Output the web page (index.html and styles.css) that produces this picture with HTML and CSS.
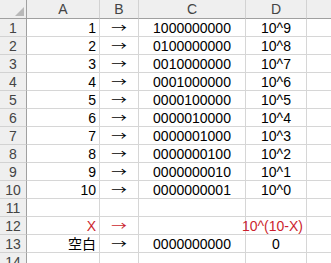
FILE: index.html
```html
<!DOCTYPE html>
<html lang="ja">
<head>
<meta charset="utf-8">
<link rel="stylesheet" href="styles.css">
</head>
<body>
<div class="sheet">
  <div class="hd corner"><span class="tri"></span></div>
  <div class="hd col">A</div>
  <div class="hd col">B</div>
  <div class="hd col">C</div>
  <div class="hd col">D</div>
  <div class="hd col last"></div>

  <div class="hd row">1</div><div class="c r">1</div><div class="c m"><span class="arw">→</span></div><div class="c m">1000000000</div><div class="c m">10^9</div><div class="c last"></div>
  <div class="hd row">2</div><div class="c r">2</div><div class="c m"><span class="arw">→</span></div><div class="c m">0100000000</div><div class="c m">10^8</div><div class="c last"></div>
  <div class="hd row">3</div><div class="c r">3</div><div class="c m"><span class="arw">→</span></div><div class="c m">0010000000</div><div class="c m">10^7</div><div class="c last"></div>
  <div class="hd row">4</div><div class="c r">4</div><div class="c m"><span class="arw">→</span></div><div class="c m">0001000000</div><div class="c m">10^6</div><div class="c last"></div>
  <div class="hd row">5</div><div class="c r">5</div><div class="c m"><span class="arw">→</span></div><div class="c m">0000100000</div><div class="c m">10^5</div><div class="c last"></div>
  <div class="hd row">6</div><div class="c r">6</div><div class="c m"><span class="arw">→</span></div><div class="c m">0000010000</div><div class="c m">10^4</div><div class="c last"></div>
  <div class="hd row">7</div><div class="c r">7</div><div class="c m"><span class="arw">→</span></div><div class="c m">0000001000</div><div class="c m">10^3</div><div class="c last"></div>
  <div class="hd row">8</div><div class="c r">8</div><div class="c m"><span class="arw">→</span></div><div class="c m">0000000100</div><div class="c m">10^2</div><div class="c last"></div>
  <div class="hd row">9</div><div class="c r">9</div><div class="c m"><span class="arw">→</span></div><div class="c m">0000000010</div><div class="c m">10^1</div><div class="c last"></div>
  <div class="hd row">10</div><div class="c r">10</div><div class="c m"><span class="arw">→</span></div><div class="c m">0000000001</div><div class="c m">10^0</div><div class="c last"></div>
  <div class="hd row">11</div><div class="c r"></div><div class="c m"></div><div class="c m"></div><div class="c m"></div><div class="c last"></div>
  <div class="hd row">12</div><div class="c r red">X</div><div class="c m red"><span class="arw">→</span></div><div class="c m"></div><div class="c r red">10^(10-X)</div><div class="c last"></div>
  <div class="hd row">13</div><div class="c r">空白</div><div class="c m"><span class="arw">→</span></div><div class="c m">0000000000</div><div class="c m">0</div><div class="c last"></div>
  <div class="hd row">14</div><div class="c r"></div><div class="c m"></div><div class="c m"></div><div class="c m"></div><div class="c last"></div>
</div>
</body>
</html>
```
FILE: styles.css
```css
html, body {
  margin: 0;
  padding: 0;
  background: #ffffff;
}
body {
  width: 331px;
  height: 263px;
  overflow: hidden;
  font-family: "Liberation Sans", "Noto Sans CJK JP", sans-serif;
  font-size: 14px;
  color: #000000;
}
.sheet {
  display: grid;
  grid-template-columns: 27px 73px 39px 107px 61px 40px;
  grid-template-rows: 19px repeat(14, 18px);
}
.hd {
  background: #efefef;
  color: #444444;
  display: flex;
  align-items: center;
  justify-content: center;
  box-sizing: border-box;
  line-height: 16px;
  overflow: hidden;
}
.col {
  border-right: 1px solid #d2d2d2;
  border-bottom: 1px solid #a0a0a0;
}
.corner {
  border-right: 1px solid #a0a0a0;
  border-bottom: 1px solid #a0a0a0;
  position: relative;
}
.tri {
  position: absolute;
  right: 2px;
  bottom: 2px;
  width: 0;
  height: 0;
  border-left: 9px solid transparent;
  border-bottom: 9px solid #b9b9b9;
}
.row {
  border-right: 1px solid #a0a0a0;
  border-bottom: 1px solid #d2d2d2;
}
.c {
  box-sizing: border-box;
  border-right: 1px solid #d6d6d6;
  border-bottom: 1px solid #d6d6d6;
  display: flex;
  align-items: center;
  white-space: nowrap;
  line-height: 16px;
  padding: 0 3px;
}
.r { justify-content: flex-end; }
.m { justify-content: center; }
.red { color: #cc1f2e; }
.arw {
  font-family: "Noto Sans CJK JP", sans-serif;
  font-size: 12px;
  line-height: 16px;
  display: inline-block;
  transform: scaleX(1.3);
}
```
